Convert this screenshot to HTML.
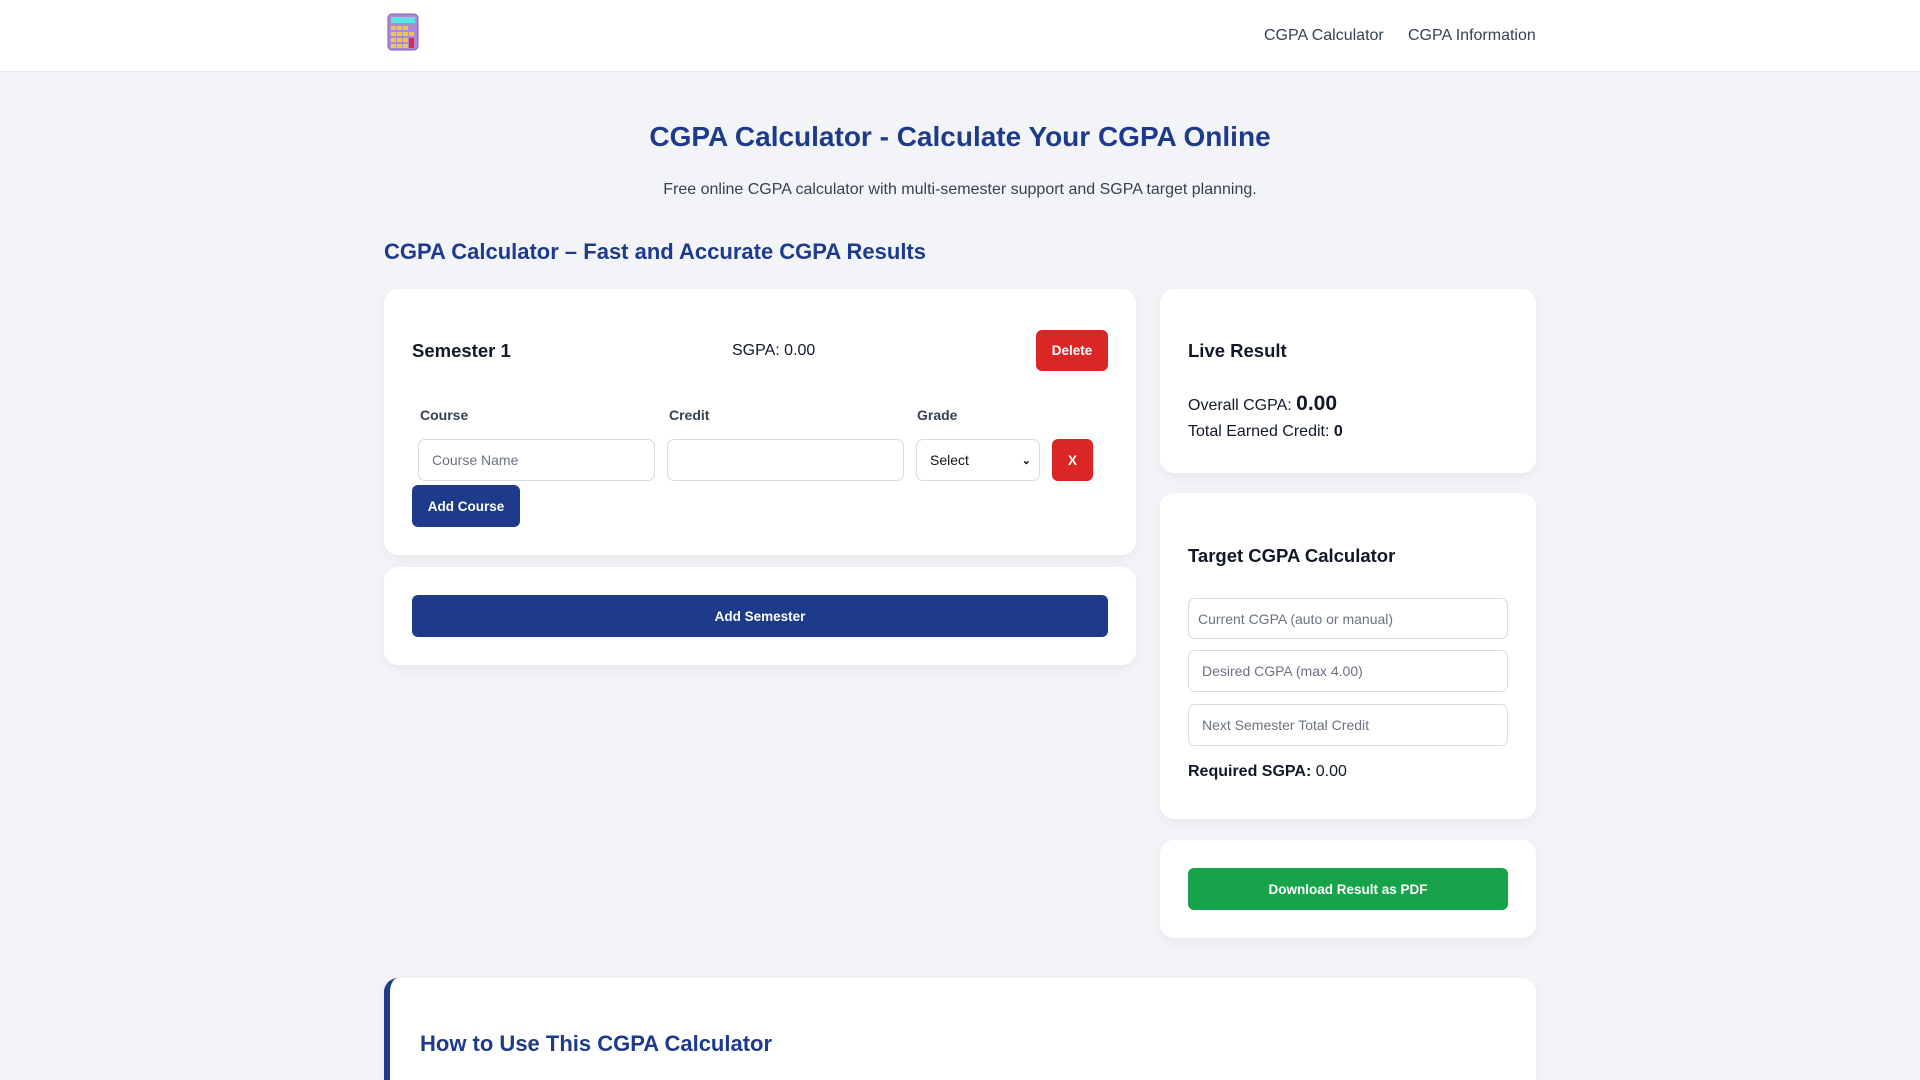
<!DOCTYPE html>
<html><head><meta charset="utf-8"><style>
*{box-sizing:border-box;margin:0;padding:0}
html,body{width:1920px;height:1080px;overflow:hidden}
body{background:#f3f4f7;font-family:"Liberation Sans",Arial,sans-serif;color:#111827;position:relative}
.a{position:absolute}
.hdr{left:0;top:0;width:1920px;height:72px;background:#fff;border-bottom:1px solid #e5e7eb}
.nav{top:27px;font-size:16px;color:#374151}
.card{background:#fff;border-radius:14px;box-shadow:0 4px 12px rgba(0,0,0,0.05)}
.btn{color:#fff;font-weight:bold;font-size:13.5px;display:flex;align-items:center;justify-content:center;border-radius:6px}
.inp{border:1px solid #d8dbe0;border-radius:7px;background:#fff;font-size:14px;color:#6b7280;display:flex;align-items:center;padding-left:13px}
.lbl{font-size:14px;font-weight:bold;color:#374151;top:407px}
</style></head><body>
<div class="a hdr"></div>
<svg class="a" style="left:387px;top:13px" width="32" height="38" viewBox="0 0 32 38">
<rect x="1" y="1" width="30" height="36" rx="4" fill="#a98bd8" stroke="#7c5fb0"/>
<rect x="4" y="4" width="24" height="6" fill="#5fe3e0"/>
<g fill="#f2c14e"><rect x="4" y="13" width="5" height="4"/><rect x="10" y="13" width="5" height="4"/><rect x="16" y="13" width="5" height="4"/><rect x="4" y="19" width="5" height="4"/><rect x="10" y="19" width="5" height="4"/><rect x="16" y="19" width="5" height="4"/><rect x="22" y="19" width="5" height="4"/><rect x="4" y="25" width="5" height="4"/><rect x="10" y="25" width="5" height="4"/><rect x="16" y="25" width="5" height="4"/><rect x="4" y="31" width="5" height="4"/><rect x="10" y="31" width="5" height="4"/><rect x="16" y="31" width="5" height="4"/></g>
<rect x="22" y="25" width="5" height="10" fill="#e0245e"/>
</svg>
<div class="a nav" style="left:1264px">CGPA Calculator</div>
<div class="a nav" style="left:1408px">CGPA Information</div>

<div class="a" style="left:0;width:1920px;top:121px;text-align:center;font-size:28px;font-weight:bold;color:#1e3a8a">CGPA Calculator - Calculate Your CGPA Online</div>
<div class="a" style="left:0;width:1920px;top:181px;text-align:center;font-size:16px;color:#374151">Free online CGPA calculator with multi-semester support and SGPA target planning.</div>
<div class="a" style="left:384px;top:239px;font-size:22px;font-weight:bold;color:#1e3a8a">CGPA Calculator – Fast and Accurate CGPA Results</div>

<div class="a card" style="left:384px;top:289px;width:752px;height:266px"></div>
<div class="a" style="left:412px;top:340px;font-size:18.5px;font-weight:bold">Semester 1</div>
<div class="a" style="left:732px;top:342px;font-size:16px">SGPA: 0.00</div>
<div class="a btn" style="left:1036px;top:330px;width:72px;height:41px;background:#dc2626">Delete</div>
<div class="a lbl" style="left:420px">Course</div>
<div class="a lbl" style="left:669px">Credit</div>
<div class="a lbl" style="left:917px">Grade</div>
<div class="a inp" style="left:418px;top:439px;width:237px;height:42px">Course Name</div>
<div class="a inp" style="left:667px;top:439px;width:237px;height:42px"></div>
<div class="a inp" style="left:916px;top:439px;width:124px;height:42px;color:#111;justify-content:space-between;padding-right:8px">Select<span style="font-size:11px;font-weight:bold">&#8964;</span></div>
<div class="a btn" style="left:1052px;top:439px;width:41px;height:42px;background:#dc2626">X</div>
<div class="a btn" style="left:412px;top:485px;width:108px;height:42px;background:#1e3a8a">Add Course</div>

<div class="a card" style="left:384px;top:567px;width:752px;height:98px"></div>
<div class="a btn" style="left:412px;top:595px;width:696px;height:42px;background:#1e3a8a">Add Semester</div>

<div class="a card" style="left:1160px;top:289px;width:376px;height:184px"></div>
<div class="a" style="left:1188px;top:340px;font-size:18.5px;font-weight:bold">Live Result</div>
<div class="a" style="left:1188px;top:392px;font-size:16px">Overall CGPA: <b style="font-size:21px">0.00</b></div>
<div class="a" style="left:1188px;top:423px;font-size:16px">Total Earned Credit: <b>0</b></div>

<div class="a card" style="left:1160px;top:493px;width:376px;height:326px"></div>
<div class="a" style="left:1188px;top:545px;font-size:18.5px;font-weight:bold">Target CGPA Calculator</div>
<div class="a inp" style="left:1188px;top:598px;width:320px;height:41px;padding-left:9px">Current CGPA (auto or manual)</div>
<div class="a inp" style="left:1188px;top:650px;width:320px;height:42px">Desired CGPA (max 4.00)</div>
<div class="a inp" style="left:1188px;top:704px;width:320px;height:42px">Next Semester Total Credit</div>
<div class="a" style="left:1188px;top:763px;font-size:16px"><b>Required SGPA:</b> 0.00</div>

<div class="a card" style="left:1160px;top:840px;width:376px;height:98px"></div>
<div class="a btn" style="left:1188px;top:868px;width:320px;height:42px;background:#16a34a">Download Result as PDF</div>

<div class="a card" style="left:384px;top:978px;width:1152px;height:102px;border-left:6px solid #1e3a8a;border-bottom-left-radius:0;border-bottom-right-radius:0"></div>
<div class="a" style="left:420px;top:1031px;font-size:22px;font-weight:bold;color:#1e3a8a">How to Use This CGPA Calculator</div>
</body></html>
